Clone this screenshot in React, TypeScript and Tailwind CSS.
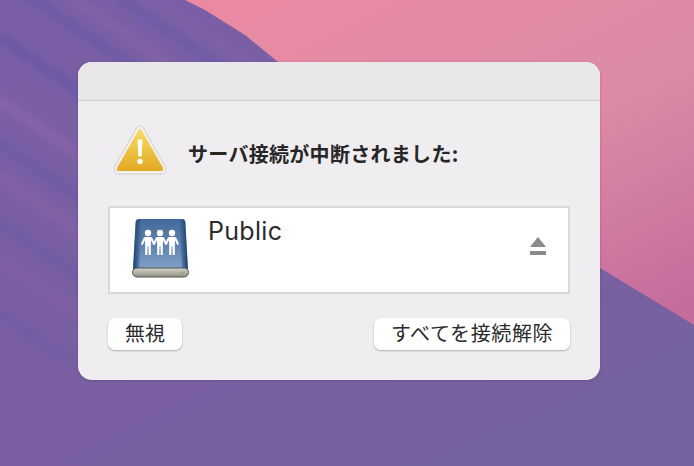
import React from "react";

// diagonal streaks in the upper left of the wallpaper: x, y, length, colour, width
const streaks: [number, number, number, string, number][] = [
  [-40, 10, 220, "#6455a6", 8],
  [-60, 60, 240, "#8a66a8", 10],
  [20, -10, 240, "#6557a6", 7],
  [60, -10, 240, "#8766a8", 8],
  [105, -12, 220, "#6658a6", 7],
  [135, -12, 180, "#8264a8", 6],
  [-50, 110, 180, "#6a58a4", 9],
  [-40, 150, 140, "#8765a6", 10],
  [-40, 195, 130, "#6b5aa4", 8],
  [-30, 240, 110, "#8161a4", 9],
  [-20, 300, 90, "#6d5aa2", 7],
];

const Wallpaper: React.FC = () => (
  <svg className="absolute inset-0" width="694" height="466" viewBox="0 0 694 466">
    <defs>
      <linearGradient id="purple" x1="0" y1="0" x2="0.7" y2="1">
        <stop offset="0" stopColor="#7a5fa6" />
        <stop offset="0.6" stopColor="#7a5fa2" />
        <stop offset="1" stopColor="#76619f" />
      </linearGradient>
      <linearGradient id="pink" x1="0.1" y1="0" x2="0.9" y2="1">
        <stop offset="0" stopColor="#ea8aa2" />
        <stop offset="0.55" stopColor="#dc8aa6" />
        <stop offset="1" stopColor="#c56c9c" />
      </linearGradient>
      <filter id="soft">
        <feGaussianBlur stdDeviation="4" />
      </filter>
    </defs>
    <rect width="694" height="466" fill="url(#purple)" />
    <g filter="url(#soft)" opacity="0.8">
      {streaks.map(([x, y, len, color, w]) => (
        <line key={`${x}-${y}`} x1={x} y1={y} x2={x + len} y2={y + len * 0.68} stroke={color} strokeWidth={w} />
      ))}
    </g>
    <path d="M185 0 L205 10 L245 35 L278 62 L600 268 L694 325 L694 0 Z" fill="url(#pink)" />
  </svg>
);

const WarningIcon: React.FC = () => (
  <svg width="54" height="50" viewBox="0 0 54 50">
    <defs>
      <linearGradient id="amber" x1="0" y1="0" x2="0" y2="1">
        <stop offset="0" stopColor="#f7dc66" />
        <stop offset="1" stopColor="#e4a825" />
      </linearGradient>
    </defs>
    <path
      d="M27 1 C25 1 24 2 23 4 L2 41 C0 45 2 49 6 49 L48 49 C52 49 54 45 52 41 L31 4 C30 2 29 1 27 1 Z"
      fill="#f3f1ec"
      stroke="#cfcdca"
      strokeWidth="1"
    />
    <path
      d="M27 4 C26 4 25.500 5 25 6 L4.500 42 C3 45 4 46 7 46 L47 46 C50 46 51 45 49.500 42 L29 6 C28.500 5 28 4 27 4 Z"
      fill="url(#amber)"
    />
    <path d="M25 15 L29 15 L28.200 31 L25.800 31 Z" fill="#fffdf2" stroke="#fffdf2" strokeLinejoin="round" />
    <circle cx="27" cy="36.500" r="2.800" fill="#fffdf2" />
  </svg>
);

const Person: React.FC<{ x: number }> = ({ x }) => (
  <g>
    <circle cx={x} cy="16" r="3.200" fill="#ffffff" />
    <path d={`M${x - 3.2} 20 L${x + 3.2} 20 L${x + 2.8} 29 L${x + 2.8} 38 L${x + 0.7} 38 L${x + 0.4} 29 L${x - 0.4} 29 L${x - 0.7} 38 L${x - 2.8} 38 L${x - 2.8} 29 Z`} fill="#ffffff" />
    <path d={`M${x - 3} 20.800 L${x - 6.200} 27.500 M${x + 3} 20.800 L${x + 6.200} 27.500`} stroke="#ffffff" strokeWidth="2" fill="none" />
  </g>
);

const DriveIcon: React.FC = () => (
  <svg width="60" height="62" viewBox="0 0 60 62">
    <defs>
      <linearGradient id="drive" x1="0" y1="0" x2="0" y2="1">
        <stop offset="0" stopColor="#41699a" />
        <stop offset="1" stopColor="#7f9fc6" />
      </linearGradient>
      <linearGradient id="edge" x1="0" y1="0" x2="0" y2="1">
        <stop offset="0" stopColor="#d6d4cb" />
        <stop offset="1" stopColor="#8f8e85" />
      </linearGradient>
      <linearGradient id="sideL" x1="0" y1="0" x2="1" y2="0">
        <stop offset="0" stopColor="#173c6a" />
        <stop offset="1" stopColor="#173c6a" stopOpacity="0" />
      </linearGradient>
      <linearGradient id="sideR" x1="1" y1="0" x2="0" y2="0">
        <stop offset="0" stopColor="#173c6a" />
        <stop offset="1" stopColor="#173c6a" stopOpacity="0" />
      </linearGradient>
    </defs>
    <path d="M9 2 L52 2 C54 2 55 3 55.300 5 L58 53 L3 53 L5.700 5 C6 3 7 2 9 2 Z" fill="url(#drive)" />
    <path d="M9 2 L12 2 L9 53 L3 53 L5.700 5 C6 3 7 2 9 2 Z" fill="url(#sideL)" />
    <path d="M52 2 L49 2 L52 53 L58 53 L55.300 5 C55 3 54 2 52 2 Z" fill="url(#sideR)" />
    <rect x="2.500" y="51" width="56" height="9" rx="4.500" fill="url(#edge)" stroke="#55554f" />
    <circle cx="52.500" cy="55.500" r="1" fill="#35d04a" />
    <Person x={18} />
    <Person x={30} />
    <Person x={42} />
  </svg>
);

const EjectIcon: React.FC = () => (
  <svg width="16" height="18" viewBox="0 0 16 18" fill="#8b8a8c">
    <path d="M8 0 L16 10 L0 10 Z" />
    <rect x="0" y="14" width="16" height="4" />
  </svg>
);

const buttonClass =
  "h-8 rounded-[7px] bg-white pb-[3px] text-[20px] leading-[29px] text-[#2b2b2b] shadow-[0_1px_2px_rgba(0,0,0,0.28)]";

const App: React.FC = () => {
  return (
    <div
      className="relative h-[466px] w-[694px] overflow-hidden pl-[78px] pt-[62px]"
      style={{ fontFamily: '"Noto Sans CJK JP", sans-serif' }}
    >
      <Wallpaper />
      <div className="relative flex h-[318px] w-[522px] flex-col overflow-hidden rounded-[14px] bg-[#efedf0] shadow-[0_1px_3px_rgba(50,30,80,0.25)]">
        <div className="h-[39px] shrink-0 border-b border-[#cfcdd0] bg-[#e9e7ea]" />

        <div className="flex h-[105px] shrink-0 items-center pl-[35px]">
          <div className="mb-[8px]">
            <WarningIcon />
          </div>
          <span className="ml-[21px] text-[20px] font-bold tracking-[0.3px] text-[#262626]">
            サーバ接続が中断されました:
          </span>
        </div>

        <div className="mx-[30px] flex h-[88px] shrink-0 items-start border-2 border-[#d9d8da] bg-white">
          <div className="ml-[20px] mt-[9px]">
            <DriveIcon />
          </div>
          <span
            className="ml-[18px] mt-[7px] text-[25px] leading-[32px] tracking-[0.3px] text-[#2b2b2b]"
            style={{ fontFamily: '"Inter", "Liberation Sans", sans-serif' }}
          >
            Public
          </span>
          <div className="ml-auto mr-[22px] mt-[29px]">
            <EjectIcon />
          </div>
        </div>

        <div className="mx-[30px] mt-[24px] flex justify-between">
          <button className={`${buttonClass} w-[74px]`}>無視</button>
          <button className={`${buttonClass} w-[196px] tracking-[0.6px]`}>すべてを接続解除</button>
        </div>
      </div>
    </div>
  );
};

export default App;
